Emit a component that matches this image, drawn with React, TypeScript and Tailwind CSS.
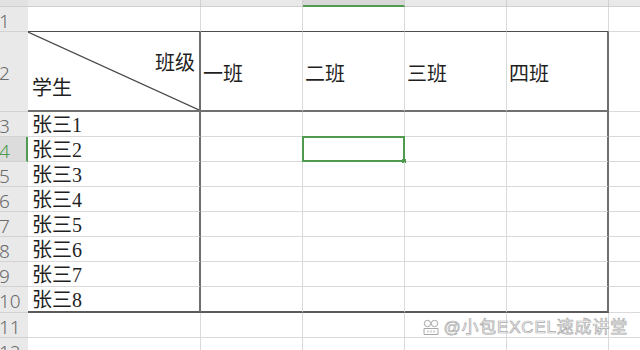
import React from 'react';

const cellFont = "font-['Liberation_Serif','Noto_Sans_CJK_SC',serif] text-[20px] text-[#1f1f1f]";

const Head = ({ n, h, active }: { n: number; h: string; active?: boolean }) => (
  <div
    className={
      active
        ? `${h} w-[28px] shrink-0 flex items-center pt-[4px] bg-[#dcdcdc] border-b border-r-2 border-b-[#d2d2d2] border-r-[#4e9a4e] font-['Noto_Sans',sans-serif] font-light text-[19px] text-[#4e9a4e] -indent-[1px] leading-none`
      : `${h} w-[28px] shrink-0 flex items-center pt-[4px] bg-[#e9e9e9] border-b border-[#d2d2d2] font-['Noto_Sans',sans-serif] font-light text-[19px] text-[#6a6a6a] -indent-[1px] leading-none`
    }
  >
    {n}
  </div>
);

// one body row, A holds the name, B-E empty, F outside the table
const BodyRow = ({ n, name, last, active }: { n: number; name?: string; last?: boolean; active?: boolean }) => {
  const b = last ? 'border-b-2 border-b-[#5a5a5a]' : 'border-b border-b-[#dadada]';
  return (
    <div className={last ? 'flex h-[26px]' : 'flex h-[25px]'}>
      <Head n={n} h={last ? 'h-[26px]' : 'h-[25px]'} active={active} />
      <div className={`w-[173px] shrink-0 border-r-2 border-r-[#6e6e6e] ${b} flex items-end pl-[4px] ${cellFont} leading-[21px]`}>
        {name}
      </div>
      <div className={`w-[102px] shrink-0 border-r border-r-[#dadada] ${b}`} />
      <div className={`relative w-[102px] shrink-0 border-r border-r-[#dadada] ${b}`}>
        {active && (
          <div className="absolute -left-[1px] -top-[1px] w-[103px] h-[26px] border-2 border-[#4e9a4e]">
            <div className="absolute -right-[3px] -bottom-[3px] w-[4px] h-[4px] bg-[#4e9a4e]" />
          </div>
        )}
      </div>
      <div className={`w-[102px] shrink-0 border-r border-r-[#dadada] ${b}`} />
      <div className={`w-[102px] shrink-0 border-r-2 border-r-[#6e6e6e] ${b}`} />
      <div className="flex-1 border-b border-b-[#dadada]" />
    </div>
  );
};

const PlainRow = ({ n }: { n: number }) => (
  <div className="flex h-[25px]">
    <Head n={n} h="h-[25px]" />
    <div className="w-[173px] shrink-0 border-r border-b border-[#dadada]" />
    <div className="w-[102px] shrink-0 border-r border-b border-[#dadada]" />
    <div className="w-[102px] shrink-0 border-r border-b border-[#dadada]" />
    <div className="w-[102px] shrink-0 border-r border-b border-[#dadada]" />
    <div className="w-[102px] shrink-0 border-r border-b border-[#dadada]" />
    <div className="flex-1 border-b border-[#dadada]" />
  </div>
);

const classes = ['一班', '二班', '三班', '四班'];
const names = ['张三1', '张三2', '张三3', '张三4', '张三5', '张三6', '张三7', '张三8'];

export default function App() {
  return (
    <div className="relative w-[640px] h-[350px] overflow-hidden bg-white">
      {/* column letters strip, cut off at the top */}
      <div className="flex h-[7px]">
        <div className="w-[28px] shrink-0 bg-[#e2e2e2] border-b border-[#cfcfcf]" />
        <div className="w-[173px] shrink-0 bg-[#e9e9e9] border-r border-b border-[#d0d0d0]" />
        <div className="w-[102px] shrink-0 bg-[#e9e9e9] border-r border-b border-[#d0d0d0]" />
        <div className="w-[102px] shrink-0 bg-[#d8d8d8] border-r border-r-[#d0d0d0] border-b-2 border-b-[#4e9a4e]" />
        <div className="w-[102px] shrink-0 bg-[#e9e9e9] border-r border-b border-[#d0d0d0]" />
        <div className="w-[102px] shrink-0 bg-[#e9e9e9] border-r border-b border-[#d0d0d0]" />
        <div className="flex-1 bg-[#e9e9e9] border-b border-[#d0d0d0]" />
      </div>

      {/* row 1 */}
      <div className="flex h-[25px]">
        <Head n={1} h="h-[25px]" />
        <div className="w-[173px] shrink-0 border-r border-r-[#dadada] border-b border-b-[#4d4d4d]" />
        <div className="w-[102px] shrink-0 border-r border-r-[#dadada] border-b border-b-[#4d4d4d]" />
        <div className="w-[102px] shrink-0 border-r border-r-[#dadada] border-b border-b-[#4d4d4d]" />
        <div className="w-[102px] shrink-0 border-r border-r-[#dadada] border-b border-b-[#4d4d4d]" />
        <div className="w-[102px] shrink-0 border-r border-r-[#dadada] border-b border-b-[#4d4d4d]" />
        <div className="flex-1 border-b border-[#dadada]" />
      </div>

      {/* row 2: header with diagonal split */}
      <div className="flex h-[80px]">
        <Head n={2} h="h-[80px]" />
        <div className={`relative w-[173px] shrink-0 border-r-2 border-r-[#6e6e6e] border-b-2 border-b-[#707070] flex flex-col ${cellFont} leading-[25px]`}>
          <svg className="absolute inset-0 w-full h-full" preserveAspectRatio="none" viewBox="0 0 171 78">
            <line x1="0" y1="0" x2="171" y2="78" stroke="#4a4a4a" strokeWidth="1.2" />
          </svg>
          <span className="self-end pr-[4px] mt-[19px]">班级</span>
          <span className="self-start pl-[4px]">学生</span>
        </div>
        {classes.map((c, i) => (
          <div
            key={c}
            className={
              i === 3
                ? `w-[102px] shrink-0 border-r-2 border-r-[#6e6e6e] border-b-2 border-b-[#707070] flex items-center pl-[2px] pt-[5px] ${cellFont}`
                : `w-[102px] shrink-0 border-r border-r-[#dadada] border-b-2 border-b-[#707070] flex items-center pl-[2px] pt-[5px] ${cellFont}`
            }
          >
            {c}
          </div>
        ))}
        <div className="flex-1 border-b border-[#dadada]" />
      </div>

      {names.map((nm, i) => (
        <BodyRow key={nm} n={i + 3} name={nm} active={i === 1} last={i === names.length - 1} />
      ))}
      <PlainRow n={11} />
      <PlainRow n={12} />

      {/* watermark */}
      <div className="absolute right-[12px] bottom-[14px] flex items-center gap-[3px] font-['Liberation_Sans','Noto_Sans_CJK_SC',sans-serif] text-[17px] tracking-[0.8px] leading-none text-white [-webkit-text-stroke:0.7px_#a8a8a8]">
        <svg width="18" height="17" viewBox="0 0 18 17" fill="white" stroke="#a8a8a8" strokeWidth="1">
          <circle cx="5.5" cy="4.5" r="3.2" />
          <circle cx="12.5" cy="4.5" r="3.2" />
          <path d="M2 9.5 h14 v6 h-14 z" />
          <path d="M6 11.5 v2 M9 11.5 v2 M12 11.5 v2" />
        </svg>
        <span>@小包EXCEL速成讲堂</span>
      </div>
    </div>
  );
}
